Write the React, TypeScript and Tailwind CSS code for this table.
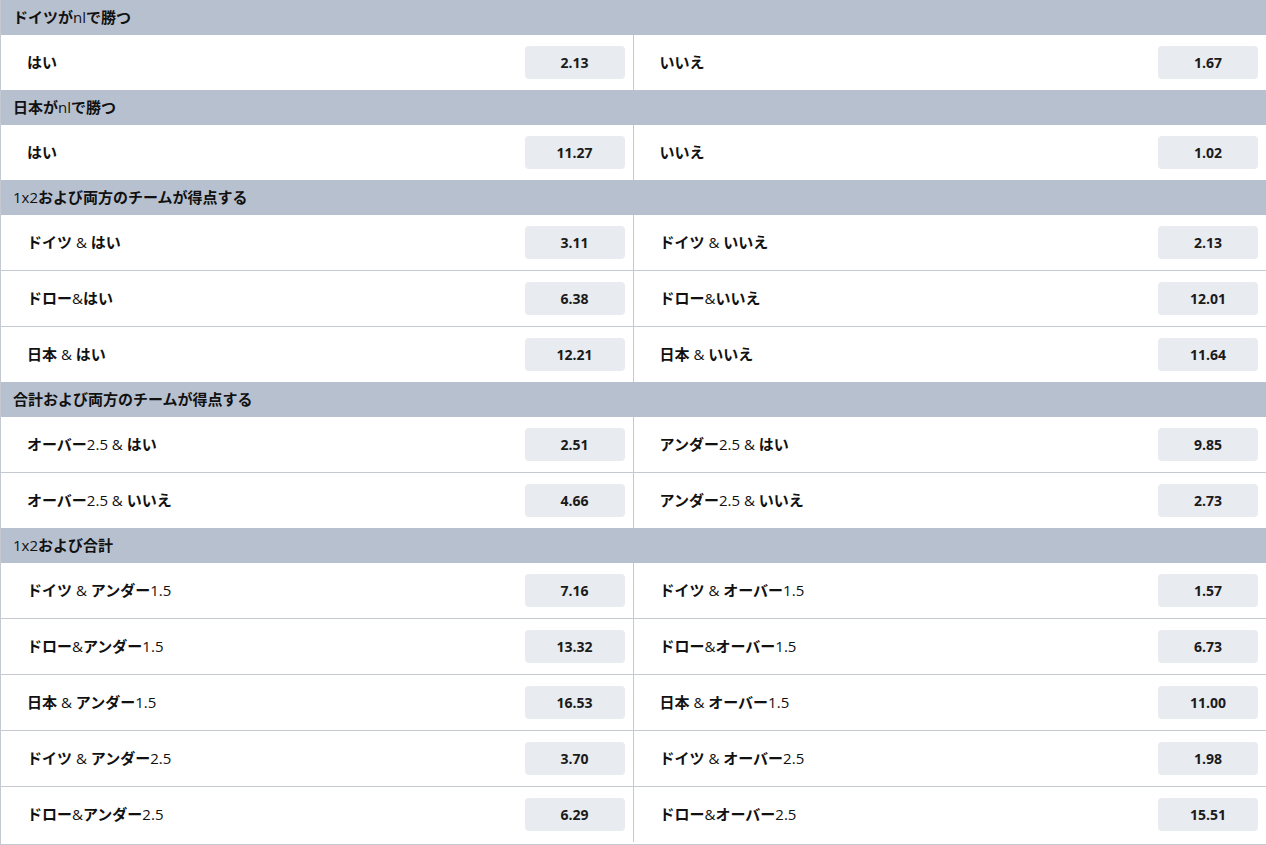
type Pick = {label: string; odds: string};

type Market = {title: string; rows: [Pick, Pick][]};

const markets: Market[] = [
  {
    title: 'ドイツがnlで勝つ',
    rows: [[{label: 'はい', odds: '2.13'}, {label: 'いいえ', odds: '1.67'}]],
  },
  {
    title: '日本がnlで勝つ',
    rows: [[{label: 'はい', odds: '11.27'}, {label: 'いいえ', odds: '1.02'}]],
  },
  {
    title: '1x2および両方のチームが得点する',
    rows: [
      [{label: 'ドイツ & はい', odds: '3.11'}, {label: 'ドイツ & いいえ', odds: '2.13'}],
      [{label: 'ドロー&はい', odds: '6.38'}, {label: 'ドロー&いいえ', odds: '12.01'}],
      [{label: '日本 & はい', odds: '12.21'}, {label: '日本 & いいえ', odds: '11.64'}],
    ],
  },
  {
    title: '合計および両方のチームが得点する',
    rows: [
      [{label: 'オーバー2.5 & はい', odds: '2.51'}, {label: 'アンダー2.5 & はい', odds: '9.85'}],
      [{label: 'オーバー2.5 & いいえ', odds: '4.66'}, {label: 'アンダー2.5 & いいえ', odds: '2.73'}],
    ],
  },
  {
    title: '1x2および合計',
    rows: [
      [{label: 'ドイツ & アンダー1.5', odds: '7.16'}, {label: 'ドイツ & オーバー1.5', odds: '1.57'}],
      [{label: 'ドロー&アンダー1.5', odds: '13.32'}, {label: 'ドロー&オーバー1.5', odds: '6.73'}],
      [{label: '日本 & アンダー1.5', odds: '16.53'}, {label: '日本 & オーバー1.5', odds: '11.00'}],
      [{label: 'ドイツ & アンダー2.5', odds: '3.70'}, {label: 'ドイツ & オーバー2.5', odds: '1.98'}],
      [{label: 'ドロー&アンダー2.5', odds: '6.29'}, {label: 'ドロー&オーバー2.5', odds: '15.51'}],
    ],
  },
];

// latin bits render in the lighter weight, like the original
function Mixed({text}: {text: string}) {
  const parts = text.split(/([\x20-\x7E]+)/).filter(Boolean);
  return (
    <>
      {parts.map((part, i) =>
        /^[\x20-\x7E]+$/.test(part) ? (
          <span key={i} className="font-normal whitespace-pre">
            {part}
          </span>
        ) : (
          <span key={i}>{part}</span>
        ),
      )}
    </>
  );
}

function Cell({pick, left}: {pick: Pick; left: boolean}) {
  return (
    <div className={`flex h-[55px] items-center justify-between pl-[26px] pr-[8px] ${left ? 'border-r border-[#c4c9d2]' : ''}`}>
      <span className="text-[15px] font-bold text-[#111]">
        <Mixed text={pick.label} />
      </span>
      <button className="flex h-[33px] w-[100px] items-center justify-center rounded-[4px] bg-[#e8ebf0] text-[14px] font-bold text-[#1a1a1a]">
        {pick.odds}
      </button>
    </div>
  );
}

export default function App() {
  return (
    <div
      className="min-h-screen w-full border-l border-b border-[#c4c9d2] bg-white"
      style={{fontFamily: '"Open Sans", "Noto Sans CJK JP", sans-serif'}}
    >
      {markets.map((market) => (
        <section key={market.title}>
          <div className="flex h-[35px] items-center bg-[#b7c0cf] px-[12px] text-[15px] font-bold text-[#111]">
            <Mixed text={market.title} />
          </div>
          {market.rows.map((row, i) => (
            <div
              key={i}
              className={`grid grid-cols-2 ${i < market.rows.length - 1 ? 'border-b border-[#c4c9d2]' : ''}`}
            >
              <Cell pick={row[0]} left />
              <Cell pick={row[1]} left={false} />
            </div>
          ))}
        </section>
      ))}
    </div>
  );
}
